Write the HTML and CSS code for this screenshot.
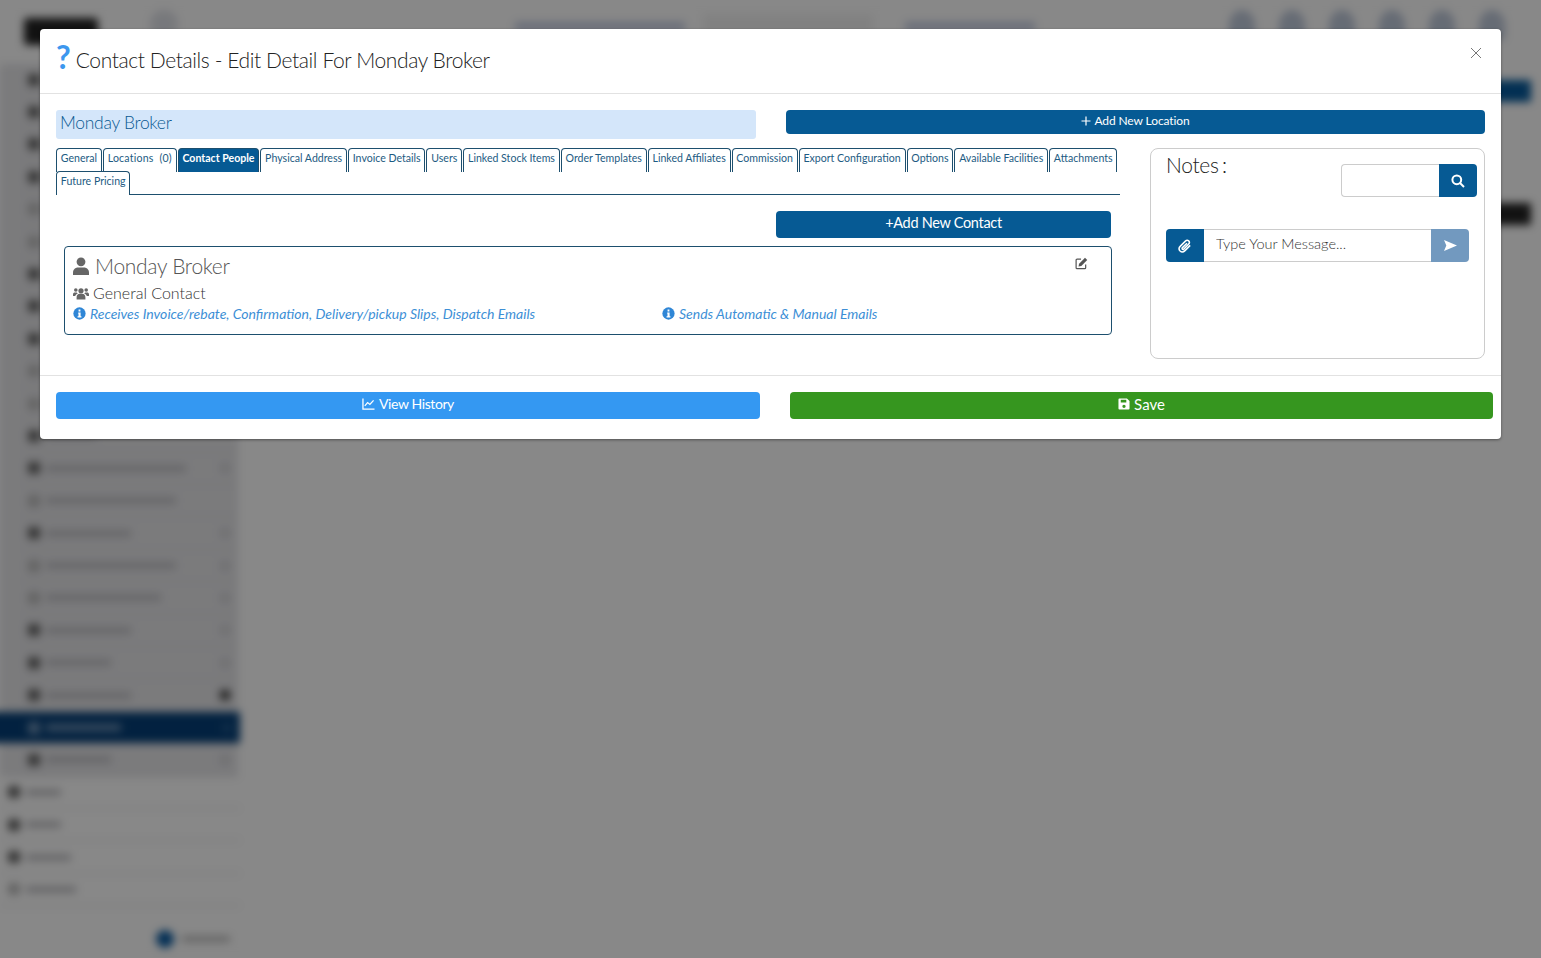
FILE: index.html
```html
<!DOCTYPE html>
<html lang="en">
<head>
  <meta charset="UTF-8" />
  <meta name="viewport" content="width=device-width, initial-scale=1.0" />
  <title>Contact Details</title>
  <link rel="stylesheet" href="styles.css">
</head>
<body>
  <!-- page behind the dialog, blurred so only its shapes show -->
  <div class="app">
    <div class="topbar">
      <div class="logo"></div>
      <div class="top-search"></div>
      <div class="top-text"></div>
      <div class="top-input"></div>
      <div class="top-text short"></div>
      <div class="top-icons">
        <span></span><span></span><span></span><span></span><span></span><span></span>
      </div>
    </div>
    <div class="app-main">
      <div class="sidebar">
        <div class="side-group">
          <div class="side-row"><i></i><b class="w50"></b></div>
          <div class="side-row"><i></i><b class="w100"></b></div>
          <div class="side-row"><i></i><b class="w120"></b></div>
          <div class="side-row"><i></i><b class="w100"></b></div>
          <div class="side-row faint"><i></i><b class="w120"></b></div>
          <div class="side-row faint"><i></i><b class="w100"></b></div>
          <div class="side-row"><i></i><b class="w120"></b></div>
          <div class="side-row"><i></i><b class="w100"></b></div>
          <div class="side-row"><i></i><b class="w120"></b></div>
          <div class="side-row faint"><i></i><b class="w100"></b></div>
          <div class="side-row faint"><i></i><b class="w50"></b></div>
          <div class="side-row"><i></i><b class="w50"></b></div>
          <div class="side-row"><i></i><b class="w140"></b><em></em></div>
          <div class="side-row faint"><i></i><b class="w130"></b></div>
          <div class="side-row"><i></i><b class="w85"></b><em></em></div>
          <div class="side-row faint"><i></i><b class="w130"></b><em></em></div>
          <div class="side-row faint"><i></i><b class="w115"></b><em></em></div>
          <div class="side-row"><i></i><b class="w85"></b><em></em></div>
          <div class="side-row"><i></i><b class="w65"></b><em></em></div>
          <div class="side-row"><i></i><b class="w85"></b><em class="dark"></em></div>
          <div class="side-row active"><i></i><b class="w75"></b><em></em></div>
          <div class="side-row"><i></i><b class="w65"></b><em></em></div>
        </div>
        <div class="side-row top"><i></i><b class="w35"></b></div>
        <div class="side-row top"><i></i><b class="w35"></b></div>
        <div class="side-row top"><i></i><b class="w45"></b></div>
        <div class="side-row top faint"><i></i><b class="w50"></b></div>
        <div class="side-toggle"><i></i><b></b></div>
      </div>
      <div class="content">
        <div class="content-btn"></div>
        <div class="content-dark"></div>
      </div>
    </div>
  </div>
  <div class="overlay"></div>

  <div class="modal">
    <div class="modal-header">
      <span class="help">?</span>
      <h1>Contact Details - Edit Detail For Monday Broker</h1>
      <svg class="close" viewBox="0 0 12 12"><path d="M1 1l10 10M11 1L1 11" /></svg>
    </div>

    <div class="modal-body">
      <div class="top-row">
        <input class="name-input" type="text" value="Monday Broker" />
        <button class="btn btn-location">
          <svg viewBox="0 0 10 10"><path d="M5 .5v9M.5 5h9" /></svg>Add New Location
        </button>
      </div>

      <div class="columns">
        <div class="left-col">
          <div class="tabs">
            <a class="tab">General</a>
            <a class="tab tab-spaced">Locations (0)</a>
            <a class="tab active">Contact People</a>
            <a class="tab">Physical Address</a>
            <a class="tab">Invoice Details</a>
            <a class="tab">Users</a>
            <a class="tab">Linked Stock Items</a>
            <a class="tab">Order Templates</a>
            <a class="tab">Linked Affiliates</a>
            <a class="tab">Commission</a>
            <a class="tab">Export Configuration</a>
            <a class="tab">Options</a>
            <a class="tab">Available Facilities</a>
            <a class="tab">Attachments</a>
            <a class="tab">Future Pricing</a>
          </div>

          <div class="contact-actions">
            <button class="btn btn-contact">+Add New Contact</button>
          </div>

          <div class="contact-card">
            <svg class="edit" viewBox="0 0 14 14">
              <path class="line" d="M11.5 8v3.6a1 1 0 0 1-1 1H2.2a1 1 0 0 1-1-1V3.3a1 1 0 0 1 1-1h4.3" />
              <path class="solid" d="M10.8.8l2.4 2.4-6.4 6.4-3 .6.6-3z" />
            </svg>
            <div class="contact-name">
              <svg viewBox="0 0 16 18"><circle cx="8" cy="4.800" r="4.400" /><path d="M0 18v-2.600C0 12.600 2.200 10.400 5 10.400h6c2.800 0 5 2.200 5 5V18z" /></svg>
              Monday Broker
            </div>
            <div class="contact-type">
              <svg viewBox="0 0 16 13"><circle cx="8" cy="3.800" r="2.600" /><circle cx="2.800" cy="3" r="1.800" /><circle cx="13.200" cy="3" r="1.800" /><path d="M3.600 12.600v-2.400c0-2 1.400-3.400 3-3.400h2.800c1.600 0 3 1.400 3 3.400v2.400zM0 9V7.400C0 6.200.9 5.600 1.900 5.600h1.800c.4.4.7.7 1.100 1-1.300.5-2.200 1.300-2.600 2.400zM16 9V7.400c0-1.200-.9-1.800-1.900-1.800h-1.800c-.4.4-.7.7-1.100 1 1.300.5 2.200 1.300 2.600 2.400z" /></svg>
              General Contact
            </div>
            <div class="contact-info">
              <div class="info-item">
                <svg viewBox="0 0 14 14"><circle cx="7" cy="7" r="6.600" /><path class="dot" d="M6 2.800h2v2H6zM5.600 6h2.600v4h.9v1.400H4.900V10h1V7.400h-.3z" /></svg>
                <span>Receives Invoice/rebate, Confirmation, Delivery/pickup Slips, Dispatch Emails</span>
              </div>
              <div class="info-item">
                <svg viewBox="0 0 14 14"><circle cx="7" cy="7" r="6.600" /><path class="dot" d="M6 2.800h2v2H6zM5.600 6h2.600v4h.9v1.400H4.900V10h1V7.400h-.3z" /></svg>
                <span>Sends Automatic &amp; Manual Emails</span>
              </div>
            </div>
          </div>
        </div>

        <div class="notes">
          <div class="notes-head">
            <h2>Notes :</h2>
            <div class="notes-search">
              <input type="text" />
              <button class="icon-btn">
                <svg viewBox="0 0 14 14"><circle cx="5.800" cy="5.800" r="4.400" /><path d="M9 9l4 4" /></svg>
              </button>
            </div>
          </div>
          <div class="message-row">
            <button class="icon-btn attach">
              <svg viewBox="0 0 14 14"><path d="M12.200 6.400L7 11.600c-1.500 1.500-3.600 1.600-4.900.4-1.300-1.300-1.200-3.400.3-4.900l5-5c1-1 2.400-1 3.300-.2.9.9.8 2.300-.2 3.300L5.900 10c-.5.5-1.200.6-1.600.2-.4-.4-.3-1.100.2-1.600L9 4.200" /></svg>
            </button>
            <input type="text" placeholder="Type Your Message..." />
            <button class="icon-btn send">
              <svg viewBox="0 0 16 14"><path d="M1 1l14 6-14 6 2.500-6z" /></svg>
            </button>
          </div>
        </div>
      </div>
    </div>

    <div class="modal-footer">
      <button class="btn btn-history">
        <svg viewBox="0 0 14 13"><path d="M1 .5v11.500h12.500M3 8.500l3-3.500 2.500 2L12.500 2.500" /></svg>View History
      </button>
      <button class="btn btn-save">
        <svg viewBox="0 0 13 13"><path fill-rule="evenodd" d="M1.500.5h8.200l2.800 2.800v8.200a1 1 0 0 1-1 1h-10a1 1 0 0 1-1-1v-10a1 1 0 0 1 1-1zM3 2v3h6V2zm3.500 5.200a1.800 1.800 0 1 0 0 3.600 1.800 1.800 0 0 0 0-3.600z" /></svg>Save
      </button>
    </div>
  </div>
</body>
</html>
```

FILE: styles.css
```css
html, body {
  margin: 0;
  height: 958px;
  overflow: hidden;
  background: #fff;
  font-family: Lato, "Open Sans", sans-serif;
}

/* blurred page behind */
.app {
  height: 958px;
  background: #fff;
  filter: blur(4px);
}
.topbar {
  height: 64px;
  display: flex;
  align-items: flex-start;
}
.logo {
  width: 74px;
  height: 27px;
  margin: 18px 0 0 24px;
  background: #222;
  border-radius: 3px;
}
.top-search {
  width: 28px;
  height: 28px;
  margin: 10px 0 0 52px;
  border-radius: 50%;
  background: #e0e2e8;
}
.top-text {
  width: 170px;
  height: 9px;
  margin: 22px 0 0 337px;
  background: #c5cde2;
}
.top-input {
  width: 170px;
  height: 20px;
  margin: 14px 0 0 18px;
  background: #f2f2f2;
}
.top-text.short {
  width: 130px;
  margin-left: 32px;
}
.top-icons {
  display: flex;
  gap: 24px;
  margin: 10px 0 0 194px;
}
.top-icons span {
  width: 26px;
  height: 30px;
  border-radius: 50% 50% 4px 4px;
  background: #c0cadb;
}
.app-main {
  display: flex;
}
.sidebar {
  width: 240px;
  position: relative;
  height: 894px;
}
.side-group {
  margin-left: 22px;
  background: #e6e6e9;
  box-shadow: -22px 0 0 #e6e6e9;
  margin-right: 2px;
}
.side-row {
  height: 32.4px;
  display: flex;
  align-items: center;
  gap: 6px;
  padding-left: 6px;
  padding-right: 8px;
  box-sizing: border-box;
  border-bottom: 1px solid #d4d4d8;
}
.side-row i {
  width: 12px;
  height: 12px;
  background: #666;
  border-radius: 2px;
  flex: none;
}
.side-row b {
  height: 7px;
  background: #c2c2c6;
}
.side-row em {
  width: 10px;
  height: 10px;
  margin-left: auto;
  background: #d2d2d6;
}
.side-row em.dark {
  background: #444;
}
.side-row.faint i {
  background: #bbb;
}
.side-row.top {
  padding-left: 8px;
  width: 240px;
  background: #fff;
}
.side-row.active {
  margin: 0 -2px 0 -62px;
  padding-left: 68px;
  background: #053f78;
}
.side-row.active i, .side-row.active b {
  background: #6d90b4;
}
.side-row.active em {
  background: #1d5488;
}
.w35 { width: 35px; }
.w45 { width: 45px; }
.w50 { width: 50px; }
.w65 { width: 65px; }
.w75 { width: 75px; }
.w85 { width: 85px; }
.w100 { width: 100px; }
.w115 { width: 115px; }
.w120 { width: 120px; }
.w130 { width: 130px; }
.w140 { width: 140px; }
.side-toggle {
  display: flex;
  align-items: center;
  gap: 8px;
  margin: 24px 0 0 156px;
}
.side-toggle i {
  width: 18px;
  height: 18px;
  border-radius: 50%;
  background: #0a5aa0;
}
.side-toggle b {
  width: 48px;
  height: 6px;
  background: #bbb;
}
.content {
  flex: 1;
  display: flex;
  flex-direction: column;
  align-items: flex-end;
  padding: 16px 10px 0 0;
}
.content-btn {
  width: 120px;
  height: 22px;
  background: #065a9c;
}
.content-dark {
  width: 120px;
  height: 22px;
  margin-top: 101px;
  background: #222;
}

.overlay {
  position: absolute;
  inset: 0;
  background: rgba(0, 0, 0, .465);
}

/* dialog */
.modal {
  position: absolute;
  left: 40px;
  top: 29px;
  width: 1461px;
  height: 410px;
  background: #fff;
  border-radius: 4px;
  box-shadow: 0 1px 3px rgba(0, 0, 0, .4);
  color: #333;
}
.modal-header {
  height: 65px;
  box-sizing: border-box;
  border-bottom: 1px solid #e2e2e2;
  display: flex;
  align-items: center;
  padding: 0 16px;
  position: relative;
}
.help {
  font-size: 32px;
  font-weight: 700;
  color: #3d97ee;
  line-height: 30px;
  margin-right: 5px;
  margin-top: -8px;
}
.modal-header h1 {
  margin: -4px 0 0;
  font-size: 21px;
  font-weight: 300;
  letter-spacing: -.4px;
  color: #222;
}
.close {
  position: absolute;
  right: 19px;
  top: 18px;
  width: 12px;
  height: 12px;
  fill: none;
  stroke: #777;
  stroke-width: 1;
}
.modal-body {
  padding: 16px 16px 0;
  height: 282px;
  box-sizing: border-box;
  border-bottom: 1px solid #e2e2e2;
}
.top-row {
  display: flex;
  gap: 30px;
  align-items: flex-start;
}
.name-input {
  width: 700px;
  height: 29px;
  box-sizing: border-box;
  padding: 0 4px 4px;
  border: none;
  border-radius: 3px;
  background: #d4e6fa;
  color: #0a5a92;
  font: 300 17.5px Lato, sans-serif;
  letter-spacing: -.3px;
}
.btn {
  border: none;
  border-radius: 4px;
  color: #fff;
  font-family: Lato, sans-serif;
  display: flex;
  align-items: center;
  justify-content: center;
  padding: 0;
}
.btn-location {
  width: 699px;
  height: 24px;
  padding-bottom: 3px;
  background: #065a94;
  font-size: 12px;
  letter-spacing: -.1px;
  gap: 3px;
}
.btn-location svg {
  width: 10px;
  height: 10px;
  fill: none;
  stroke: #fff;
  stroke-width: 1.2;
}
.columns {
  display: flex;
  gap: 30px;
  align-items: flex-start;
  margin-top: 9px;
}
.left-col {
  width: 1064px;
}
.tabs {
  display: flex;
  flex-wrap: wrap;
  align-content: flex-start;
  gap: 0 1px;
  border-bottom: 1px solid #1d4f6e;
  height: 46px;
}
.tab {
  height: 24px;
  margin-bottom: -1px;
  box-sizing: border-box;
  padding: 0 3.8px;
  border: 1px solid #1d4f6e;
  border-bottom: none;
  border-radius: 4px 4px 0 0;
  background: #fff;
  color: #1d5b82;
  font-size: 10.58px;
  line-height: 18px;
  white-space: nowrap;
}
.tab-spaced {
  word-spacing: 3px;
  letter-spacing: .2px;
}
.tab.active {
  background: #065a94;
  color: #fff;
  font-weight: 700;
}
.contact-actions {
  display: flex;
  justify-content: flex-end;
  padding: 16px 9px 8px 0;
}
.btn-contact {
  width: 335px;
  height: 27px;
  padding-bottom: 4px;
  background: #065a94;
  font-size: 14.5px;
  letter-spacing: -.3px;
}
.contact-card {
  position: relative;
  width: 1048px;
  height: 89px;
  margin-left: 8px;
  box-sizing: border-box;
  border: 1px solid #1d4f6e;
  border-radius: 4px;
  padding: 5px 8px;
}
.edit {
  position: absolute;
  right: 23px;
  top: 10px;
  width: 13px;
  height: 13px;
}
.edit .line {
  fill: none;
  stroke: #555;
  stroke-width: 1.3;
}
.edit .solid {
  fill: #555;
}
.contact-name {
  display: flex;
  align-items: center;
  gap: 6px;
  font-size: 21px;
  font-weight: 300;
  letter-spacing: -.3px;
  line-height: 28px;
  color: #555;
}
.contact-name svg {
  width: 16px;
  height: 18px;
  fill: #666;
}
.contact-type {
  display: flex;
  align-items: center;
  gap: 4px;
  margin-top: 2px;
  font-size: 16px;
  font-weight: 300;
  line-height: 22px;
  color: #333;
}
.contact-type svg {
  width: 16px;
  height: 13px;
  fill: #666;
}
.contact-info {
  display: grid;
  grid-template-columns: 589px 1fr;
}
.info-item {
  display: flex;
  align-items: center;
  gap: 4px;
  font-size: 14px;
  line-height: 19px;
  font-style: italic;
  color: #3d8fd6;
}
.info-item svg {
  width: 13px;
  height: 13px;
  flex: none;
  fill: #2f86d6;
}
.info-item .dot {
  fill: #fff;
}
.notes {
  width: 335px;
  height: 211px;
  box-sizing: border-box;
  border: 1px solid #ccc;
  border-radius: 8px;
  padding: 2px 7px 0 15px;
}
.notes-head {
  display: flex;
  justify-content: space-between;
  align-items: flex-start;
}
.notes-head h2 {
  margin: 0;
  font-size: 21px;
  font-weight: 300;
  letter-spacing: -.3px;
  word-spacing: -2px;
  line-height: 28px;
  color: #222;
}
.notes-search {
  display: flex;
  margin-top: 13px;
}
.notes-search input {
  width: 98px;
  height: 33px;
  box-sizing: border-box;
  border: 1px solid #ccc;
  border-right: none;
  border-radius: 4px 0 0 4px;
}
.icon-btn {
  width: 38px;
  height: 33px;
  border: none;
  padding: 0;
  background: #065a94;
  display: flex;
  align-items: center;
  justify-content: center;
}
.notes-search .icon-btn {
  border-radius: 0 4px 4px 0;
}
.notes-search svg {
  width: 14px;
  height: 14px;
  fill: none;
  stroke: #fff;
  stroke-width: 2;
}
.message-row {
  display: flex;
  width: 303px;
  margin-top: 32px;
}
.message-row input {
  flex: 1;
  min-width: 0;
  height: 33px;
  box-sizing: border-box;
  padding: 0 12px 5px;
  border: 1px solid #ccc;
  border-width: 1px 0;
  font: 300 14.5px Lato, sans-serif;
}
.message-row input::placeholder {
  color: #333;
}
.attach {
  border-radius: 4px 0 0 4px;
}
.attach svg {
  width: 14px;
  height: 14px;
  fill: none;
  stroke: #fff;
  stroke-width: 1.5;
}
.send {
  background: #7299bf;
  border-radius: 0 4px 4px 0;
}
.send svg {
  width: 15px;
  height: 13px;
  fill: #fff;
}
.modal-footer {
  display: flex;
  gap: 30px;
  padding: 16px 8px 0 16px;
}
.modal-footer .btn {
  height: 27px;
  padding-bottom: 3px;
  font-size: 15px;
  gap: 4px;
}
.btn-history {
  width: 704px;
  background: #3498f2;
}
.modal-footer .btn-history {
  padding-bottom: 4px;
  font-size: 14px;
  letter-spacing: -.4px;
}
.btn-history svg {
  width: 13px;
  height: 12px;
  fill: none;
  stroke: #fff;
  stroke-width: 1.4;
}
.btn-save {
  width: 703px;
  background: #36961f;
}
.btn-save svg {
  width: 12px;
  height: 12px;
  fill: #fff;
}
```
